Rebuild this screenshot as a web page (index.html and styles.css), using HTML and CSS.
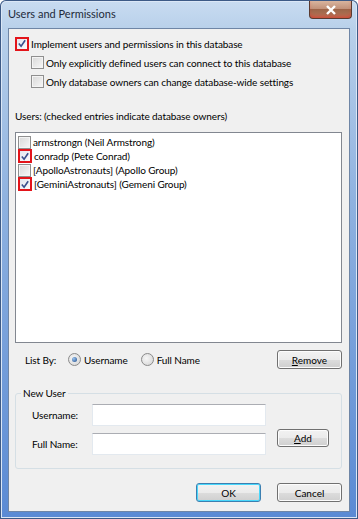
FILE: index.html
```html
<!DOCTYPE html>
<html>
<head>
	<meta charset="utf-8">
	<meta name="viewport" content="width=device-width, initial-scale=1">
	<link rel="stylesheet" href="styles.css">
</head>
<body>
<div class="window">
   <div class="titlebar">
      <span class="title">Users and Permissions</span>
      <span class="close">
         <svg width="12" height="10" viewBox="0 0 12 10"><path d="M2 1 L10 9 M10 1 L2 9" stroke="#fff" stroke-width="2.4"/></svg>
      </span>
   </div>
   <div class="client">
      <div class="opts">
         <div class="row"><span class="cb hl"><svg width="11" height="11" viewBox="0 0 11 11"><path d="M2 5.5 L4.5 8.5 L9 2" fill="none" stroke="#3a4f8c" stroke-width="1.8"/></svg></span>Implement users and permissions in this database</div>
         <div class="row sub"><span class="cb"></span>Only explicitly defined users can connect to this database</div>
         <div class="row sub"><span class="cb"></span>Only database owners can change database-wide settings</div>
      </div>
      <div class="users-label">Users: (checked entries indicate database owners)</div>
      <div class="listbox">
         <div class="item"><span class="cb"></span>armstrongn (Neil Armstrong)</div>
         <div class="item"><span class="cb hl"><svg width="11" height="11" viewBox="0 0 11 11"><path d="M2 5.5 L4.5 8.5 L9 2" fill="none" stroke="#3a4f8c" stroke-width="1.8"/></svg></span>conradp (Pete Conrad)</div>
         <div class="item"><span class="cb"></span>[ApolloAstronauts] (Apollo Group)</div>
         <div class="item"><span class="cb hl"><svg width="11" height="11" viewBox="0 0 11 11"><path d="M2 5.5 L4.5 8.5 L9 2" fill="none" stroke="#3a4f8c" stroke-width="1.8"/></svg></span>[GeminiAstronauts] (Gemeni Group)</div>
      </div>
      <div class="listby">
         <span class="lb-label">List By:</span>
         <span class="radio on"></span><span class="rtext">Username</span>
         <span class="radio"></span><span class="rtext">Full Name</span>
         <button class="btn remove"><u>R</u>emove</button>
      </div>
      <div class="group">
         <div class="legend">New User</div>
         <div class="group-body">
            <div class="fields">
               <div class="field"><span class="flabel">Username:</span><span class="input"></span></div>
               <div class="field"><span class="flabel">Full Name:</span><span class="input"></span></div>
            </div>
            <button class="btn add"><u>A</u>dd</button>
         </div>
      </div>
      <div class="actions">
         <button class="btn ok">OK</button>
         <button class="btn">Cancel</button>
      </div>
   </div>
</div>
</body>
</html>
```

FILE: styles.css
```css
body {
   margin: 0;
   font-family: Lato, "Open Sans", sans-serif;
   font-size: 10px;
   letter-spacing: -0.1px;
   color: #000;
   background: #fff;
}

.window {
   width: 358px;
   height: 519px;
   box-sizing: border-box;
   padding: 0 8px 7px 8px;
   display: flex;
   flex-direction: column;
   background: linear-gradient(180deg, #c9dcf1 0, #b8d0ea 30px, #8fb2e0 200px, #5a8ad4 519px);
   box-shadow: inset 0 0 0 1px #3d5a86, inset 0 0 0 2px #dbe7f6;
   border-radius: 6px 6px 0 0;
}

.titlebar {
   height: 28px;
   display: flex;
   justify-content: space-between;
   align-items: flex-start;
   flex-shrink: 0;
}

.title {
   margin-top: 7px;
   font-size: 11px;
   letter-spacing: 0;
   color: #1e2a3a;
}

.close {
   width: 43px;
   height: 18px;
   margin-right: -2px;
   margin-top: 1px;
   display: flex;
   justify-content: center;
   align-items: center;
   border: 1px solid #5a3a30;
   border-top: none;
   border-radius: 0 0 4px 4px;
   box-sizing: border-box;
   background: linear-gradient(180deg, #d9b49e 0, #c2927a 45%, #9e6448 50%, #b4785a 100%);
   box-shadow: inset 0 -3px 5px -3px #e8241c;
}

.client {
   flex: 1;
   background: #f0f0f0;
   border: 1px solid #6f86a6;
   padding: 0 7px 0 6px;
   display: flex;
   flex-direction: column;
}

.opts {
   margin-top: 5px;
}

.row {
   height: 19px;
   display: flex;
   align-items: center;
}

.row.sub {
   padding-left: 16px;
}

.cb {
   width: 13px;
   height: 13px;
   box-sizing: border-box;
   border: 1px solid #8f8f8f;
   background: linear-gradient(135deg, #d8d8d8, #f7f7f7);
   box-shadow: inset 0 0 0 1px #f4f4f4;
   margin-right: 2px;
   flex-shrink: 0;
   display: flex;
   align-items: center;
   justify-content: center;
}

.cb.hl {
   width: 14px;
   height: 14px;
   border: 2px solid #e3141a;
   box-shadow: none;
   background: linear-gradient(135deg, #e2e6ef, #fafafa);
}

.users-label {
   margin-top: 17px;
   height: 17px;
   line-height: 17px;
}

.listbox {
   margin-top: 7px;
   height: 211px;
   box-sizing: border-box;
   border: 1px solid #828790;
   background: #fff;
   padding: 2px 0 0 2px;
}

.item {
   height: 14px;
   display: flex;
   align-items: center;
}

.listby {
   margin-top: 7px;
   height: 19px;
   display: flex;
   align-items: center;
   padding-left: 10px;
}

.lb-label {
   width: 43px;
}

.radio {
   width: 11px;
   height: 11px;
   border-radius: 50%;
   border: 1px solid #8a8a8a;
   background: radial-gradient(circle at 40% 40%, #f7f7f7, #d2d2d2);
   margin-right: 3px;
   display: flex;
   align-items: center;
   justify-content: center;
}

.radio.on::after {
   content: "";
   width: 5px;
   height: 5px;
   border-radius: 50%;
   background: radial-gradient(circle at 35% 35%, #9cc4ee, #1c4a8a);
}

.rtext {
   margin-right: 13px;
}

.btn {
   font-family: inherit;
   font-size: 10px;
   color: #000;
   height: 19px;
   width: 65px;
   padding: 0;
   border: 1px solid #707070;
   border-radius: 3px;
   background: linear-gradient(180deg, #f2f2f2 0, #ebebeb 50%, #dddddd 50%, #cfcfcf 100%);
   box-shadow: inset 0 0 0 1px #fcfcfc;
}

.remove {
   margin-left: auto;
}

.group {
   margin-top: 24px;
   height: 76px;
   box-sizing: border-box;
   border: 1px solid #d5dfe5;
   border-radius: 3px;
   display: flex;
   flex-direction: column;
}

.legend {
   align-self: flex-start;
   margin: -8px 0 0 5px;
   padding: 0 2px;
   height: 14px;
   line-height: 14px;
   background: #f0f0f0;
}

.group-body {
   display: flex;
   align-items: center;
   padding-left: 16px;
   margin-top: 4px;
}

.fields {
   display: flex;
   flex-direction: column;
   gap: 7px;
}

.field {
   display: flex;
   align-items: center;
}

.flabel {
   width: 60px;
}

.input {
   width: 174px;
   height: 22px;
   box-sizing: border-box;
   background: #fff;
   border: 1px solid #e3e9ef;
   border-top-color: #abadb3;
}

.add {
   width: 52px;
   height: 18px;
   margin: 16px 0 0 11px;
}

.actions {
   margin-top: 14px;
   display: flex;
   justify-content: flex-end;
   gap: 16px;
}

.ok {
   border-color: #3c7fb1;
   box-shadow: inset 0 0 0 1px #48d7fb;
}
```
